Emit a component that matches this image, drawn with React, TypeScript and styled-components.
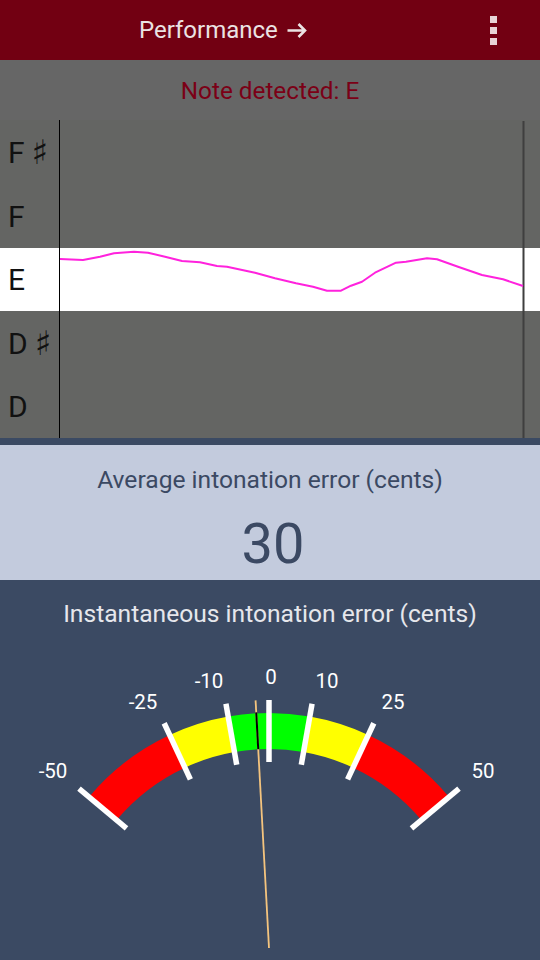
import React from 'react';
import styled, { createGlobalStyle } from 'styled-components';

const GlobalStyle = createGlobalStyle`
  html, body { margin: 0; padding: 0; }
  body {
    font-family: Roboto, "Noto Sans", sans-serif;
    background: #3b4a63;
  }
`;

const Screen = styled.div`
  width: 540px;
  height: 960px;
  display: flex;
  flex-direction: column;
  overflow: hidden;
`;

const ActionBar = styled.header`
  flex: none;
  height: 60px;
  box-sizing: border-box;
  padding: 0 43px 0 139px;
  background: #720012;
  display: flex;
  align-items: center;
`;

const Title = styled.div`
  flex: 1;
  display: flex;
  align-items: center;
  gap: 9px;
  font-size: 24px;
  color: #ebe3e3;
`;

const Arrow = styled.svg`
  display: block;
  width: 20px;
  height: 15px;
  margin-top: 1px;
`;

const Overflow = styled.div`
  display: flex;
  flex-direction: column;
  gap: 4px;
`;

const Dot = styled.span`
  width: 7px;
  height: 7px;
  background: #e8d3d6;
`;

const NoteBar = styled.div`
  flex: none;
  height: 60px;
  background: #666666;
  color: #7b0016;
  font-size: 24.3px;
  display: flex;
  align-items: center;
  justify-content: center;
`;

const Staff = styled.div`
  flex: none;
  position: relative;
  height: 318px;
  display: flex;
  flex-direction: column;
`;

const NoteRow = styled.div<{ $active?: boolean; $h: number }>`
  height: ${(p) => p.$h}px;
  background: ${(p) => (p.$active ? '#ffffff' : '#646563')};
  display: flex;
  align-items: center;
  padding-left: 8px;
  font-size: 30px;
  color: #111111;
`;

const Sharp = styled.span`
  font-family: "DejaVu Sans", sans-serif;
  font-size: 34px;
  line-height: 1;
  margin-left: 7px;
`;

const Overlay = styled.svg`
  position: absolute;
  inset: 0;
  width: 540px;
  height: 318px;
`;

const Average = styled.section`
  flex: none;
  height: 135px;
  margin-top: 7px;
  box-sizing: border-box;
  padding-top: 21px;
  background: #c3cbdd;
  display: flex;
  flex-direction: column;
  align-items: center;
  color: #3b4963;
`;

const Caption = styled.div<{ $light?: boolean }>`
  font-size: 24.6px;
  line-height: 28px;
  color: ${(p) => (p.$light ? '#e6e7ec' : 'inherit')};
`;

const BigValue = styled.div`
  margin-top: 22px;
  padding-left: 6px;
  font-size: 56px;
  line-height: 56px;
`;

const GaugePanel = styled.section`
  flex: 1;
  padding-top: 20px;
  background: #3b4a63;
  display: flex;
  flex-direction: column;
  align-items: center;
`;

const GaugeSvg = styled.svg`
  display: block;
  width: 540px;
  height: 332px;
`;

const notes = [
  { name: 'F', sharp: true, h: 64 },
  { name: 'F', h: 64 },
  { name: 'E', h: 63, active: true },
  { name: 'D', sharp: true, h: 64 },
  { name: 'D', h: 63 },
];

const pitch = [
  [60, 259], [83, 260], [100, 256.7], [114, 253.3], [134, 251.7], [148, 252.7],
  [165, 256.7], [182, 261], [200, 262.3], [217, 266], [227, 266.7], [255, 272.7],
  [275, 278.3], [296, 283.3], [313, 286.7], [327, 290.7], [341, 290.7], [351, 285.7],
  [362, 281.7], [375, 272.7], [396, 262.7], [406, 261.7], [427, 258.3], [437, 259.3],
  [458, 266.7], [482, 275], [503, 279.3], [523, 286],
];

const CX = 269;
const CY = 948;

const pt = (deg: number, r: number) => {
  const a = (deg * Math.PI) / 180;
  return [CX + r * Math.sin(a), CY - r * Math.cos(a)];
};

const sector = (a1: number, a2: number, r1: number, r2: number) => {
  const [x1, y1] = pt(a1, r2);
  const [x2, y2] = pt(a2, r2);
  const [x3, y3] = pt(a2, r1);
  const [x4, y4] = pt(a1, r1);
  return `M${x1} ${y1} A${r2} ${r2} 0 0 1 ${x2} ${y2} L${x3} ${y3} A${r1} ${r1} 0 0 0 ${x4} ${y4} Z`;
};

const bands = [
  { from: -50, to: -25, color: '#ff0000' },
  { from: -25, to: -10, color: '#ffff00' },
  { from: -10, to: 10, color: '#00ff00' },
  { from: 10, to: 25, color: '#ffff00' },
  { from: 25, to: 50, color: '#ff0000' },
];

const ticks = [-50, -25, -10, 0, 10, 25, 50];

const labels = [
  { text: '-50', x: 53, y: 771 },
  { text: '-25', x: 143, y: 702 },
  { text: '-10', x: 209, y: 681 },
  { text: '0', x: 271, y: 677 },
  { text: '10', x: 327, y: 681 },
  { text: '25', x: 393, y: 702 },
  { text: '50', x: 483, y: 771 },
];

function Gauge({ cents }: { cents: number }) {
  const [nx0, ny0] = pt(cents, 0);
  const [nx1, ny1] = pt(cents, 248);
  const [bx0, by0] = pt(cents, 199);
  const [bx1, by1] = pt(cents, 236);
  return (
    <GaugeSvg viewBox="0 628 540 332">
      {bands.map((b) => (
        <path key={b.from} d={sector(b.from, b.to, 199, 235)} fill={b.color} />
      ))}
      {ticks.map((t) => {
        const [x0, y0] = pt(t, 186);
        const [x1, y1] = pt(t, 248);
        return <line key={t} x1={x0} y1={y0} x2={x1} y2={y1} stroke="#ffffff" strokeWidth={5.5} />;
      })}
      {labels.map((l) => (
        <text
          key={l.text}
          x={l.x}
          y={l.y}
          fill="#ffffff"
          fontSize={20.5}
          fontFamily="Roboto, sans-serif"
          textAnchor="middle"
          dominantBaseline="central"
        >
          {l.text}
        </text>
      ))}
      <line x1={nx0} y1={ny0} x2={nx1} y2={ny1} stroke="#f4c47e" strokeWidth={1.8} />
      <line x1={bx0} y1={by0} x2={bx1} y2={by1} stroke="#000000" strokeWidth={2} />
    </GaugeSvg>
  );
}

export default function App() {
  return (
    <Screen>
      <GlobalStyle />
      <ActionBar>
        <Title>
          <span>Performance</span>
          <Arrow viewBox="0 0 20 15" aria-label="→">
            <path
              d="M0.5 7.5 H18 M11.5 1 L18 7.5 L11.5 14"
              fill="none"
              stroke="#ebe3e3"
              strokeWidth={2.6}
            />
          </Arrow>
        </Title>
        <Overflow>
          <Dot />
          <Dot />
          <Dot />
        </Overflow>
      </ActionBar>
      <NoteBar>Note detected: E</NoteBar>
      <Staff>
        {notes.map((n, i) => (
          <NoteRow key={i} $h={n.h} $active={n.active}>
            {n.name}
            {n.sharp && <Sharp>♯</Sharp>}
          </NoteRow>
        ))}
        <Overlay viewBox="0 120 540 318">
          <line x1={59.5} y1={120} x2={59.5} y2={438} stroke="#000000" strokeWidth={1} />
          <line x1={523.5} y1={121} x2={523.5} y2={438} stroke="#3f3f3f" strokeWidth={2} />
          <polyline
            points={pitch.map((p) => p.join(',')).join(' ')}
            fill="none"
            stroke="#ff22dd"
            strokeWidth={2}
            strokeLinejoin="round"
          />
        </Overlay>
      </Staff>
      <Average>
        <Caption>Average intonation error (cents)</Caption>
        <BigValue>30</BigValue>
      </Average>
      <GaugePanel>
        <Caption $light>Instantaneous intonation error (cents)</Caption>
        <Gauge cents={-3.1} />
      </GaugePanel>
    </Screen>
  );
}
